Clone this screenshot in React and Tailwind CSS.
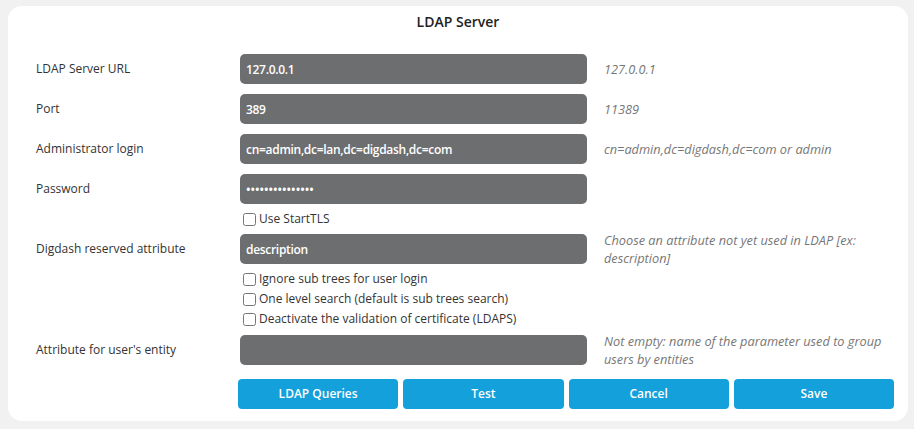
import { useState } from 'react';

const font = { fontFamily: '"Open Sans", "Liberation Sans", sans-serif' };

function Field({ label, value, hint, type = 'text' }) {
  return (
    <div className="flex h-[30px] items-center">
      <label className="w-[204px] shrink-0 text-[12px] text-[#333]">{label}</label>
      <input
        type={type}
        defaultValue={value}
        className={`w-[347px] h-[30px] shrink-0 rounded-[5px] bg-[#6d6e70] px-[6px] text-[12px] font-semibold text-white outline-none ${
          type === 'password' ? 'tracking-normal' : 'tracking-[-0.3px]'
        }`}
      />
      {hint && (
        <div className="ml-[17px] w-[290px] text-[12.75px] italic leading-[18px] text-[#777]">{hint}</div>
      )}
    </div>
  );
}

function Check({ label }) {
  const [on, setOn] = useState(false);
  return (
    <label className="ml-[204px] flex h-[20px] items-center text-[12px] text-[#333]">
      <input
        type="checkbox"
        checked={on}
        onChange={() => setOn(!on)}
        className="ml-[3px] mr-[3px] h-[13px] w-[13px]"
      />
      {label}
    </label>
  );
}

export default function App() {
  return (
    <div className="min-h-screen bg-[#f1f1f1] px-[8px] pt-[6px]" style={font}>
      <div className="w-[900px] rounded-[14px] bg-white pl-[28px] pr-[14px] pt-[5px] pb-[12px]">
        <h2 className="text-center text-[14px] font-semibold text-[#222] pr-[14px]">LDAP Server</h2>

        <div className="mt-[22px] flex flex-col">
          <Field label="LDAP Server URL" value="127.0.0.1" hint="127.0.0.1" />
          <div className="h-[10px]" />
          <Field label="Port" value="389" hint="11389" />
          <div className="h-[10px]" />
          <Field label="Administrator login" value="cn=admin,dc=lan,dc=digdash,dc=com" hint="cn=admin,dc=digdash,dc=com or admin" />
          <div className="h-[10px]" />
          <Field label="Password" type="password" value="secretpassword1" />
          <div className="h-[5px]" />
          <Check label="Use StartTLS" />
          <div className="h-[5px]" />
          <Field label="Digdash reserved attribute" value="description" hint="Choose an attribute not yet used in LDAP [ex: description]" />
          <div className="h-[5px]" />
          <Check label="Ignore sub trees for user login" />
          <Check label="One level search (default is sub trees search)" />
          <Check label="Deactivate the validation of certificate (LDAPS)" />
          <div className="h-[6px]" />
          <Field label="Attribute for user's entity" value="" hint="Not empty: name of the parameter used to group users by entities" />
        </div>

        <div className="mt-[14px] ml-[202px] grid grid-cols-4 gap-[5px]">
          {['LDAP Queries', 'Test', 'Cancel', 'Save'].map((b) => (
            <button
              key={b}
              className="h-[30px] rounded-[4px] bg-[#14a0da] text-[12px] font-semibold text-white"
            >
              {b}
            </button>
          ))}
        </div>
      </div>
    </div>
  );
}
